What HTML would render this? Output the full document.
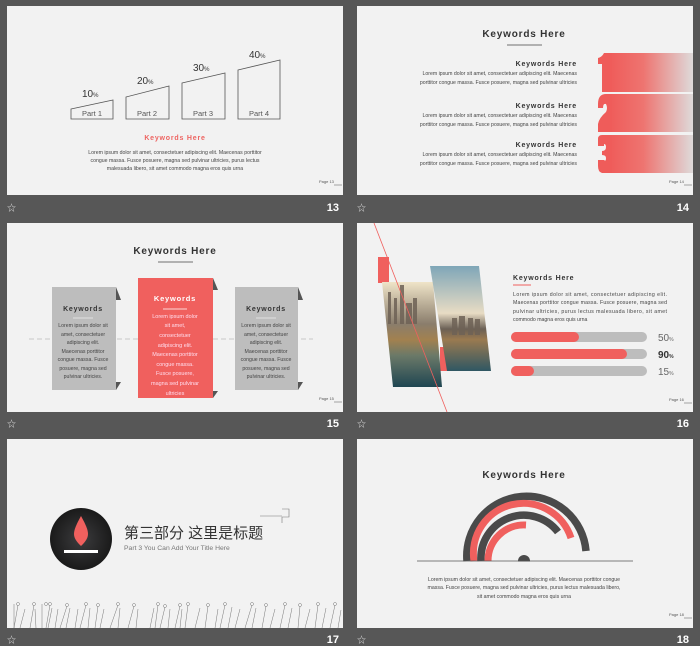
<!DOCTYPE html>
<html><head><meta charset="utf-8"><style>
html,body{margin:0;padding:0;background:#575757;width:700px;height:646px;overflow:hidden}
svg{display:block}
text{font-family:"Liberation Sans","Noto Sans CJK SC",sans-serif}
.b{font-size:5.2px;fill:#444}
.h{font-weight:bold;fill:#333;letter-spacing:.8px}
.pg{font-size:4px;fill:#555}
.num{font-family:"Liberation Serif",serif;font-weight:bold;font-size:11px;fill:#fff}
.st{font-size:9px;fill:#ddd}
</style></head><body>
<svg width="700" height="646" viewBox="0 0 700 646" xmlns="http://www.w3.org/2000/svg">
<defs>
<linearGradient id="g1" x1="0" x2="1"><stop offset="0" stop-color="#ef5c5a"/><stop offset="0.4" stop-color="#ee7470"/><stop offset="1" stop-color="#dedada"/></linearGradient>
<linearGradient id="sky" x1="0" y1="0" x2="0" y2="1"><stop offset="0" stop-color="#7fa6b8"/><stop offset="0.45" stop-color="#e8dcc4"/><stop offset="0.6" stop-color="#6b6055"/><stop offset="0.7" stop-color="#9a7a50"/><stop offset="1" stop-color="#2f5763"/></linearGradient>
<linearGradient id="sky2" x1="0" y1="0" x2="0" y2="1"><stop offset="0" stop-color="#efe4c8"/><stop offset="0.4" stop-color="#8a7d6c"/><stop offset="0.55" stop-color="#a2814f"/><stop offset="0.7" stop-color="#6b7968"/><stop offset="1" stop-color="#1f4652"/></linearGradient>
<radialGradient id="cg"><stop offset="0" stop-color="#3c3c3e"/><stop offset="1" stop-color="#1a1a1a"/></radialGradient>
</defs>
<rect x="7" y="6" width="336" height="189" fill="#f2f2f2"/>
<rect x="357" y="6" width="336" height="189" fill="#f2f2f2"/>
<rect x="7" y="223" width="336" height="189" fill="#f2f2f2"/>
<rect x="357" y="223" width="336" height="189" fill="#f2f2f2"/>
<rect x="7" y="439" width="336" height="189" fill="#f2f2f2"/>
<rect x="357" y="439" width="336" height="189" fill="#f2f2f2"/>

<g class="st"><text x="7" y="211">☆</text><text x="357" y="211">☆</text><text x="7" y="427">☆</text><text x="357" y="427">☆</text><text x="7" y="643">☆</text><text x="357" y="643">☆</text></g>
<g class="num" text-anchor="end"><text x="339" y="211">13</text><text x="689" y="211">14</text><text x="339" y="427">15</text><text x="689" y="427">16</text><text x="339" y="643">17</text><text x="689" y="643">18</text></g>
<g class="pg"><text x="319" y="183">Page 13</text><text x="669" y="183">Page 14</text><text x="319" y="400">Page 15</text><text x="669" y="401">Page 16</text><text x="669" y="616">Page 18</text></g>
<g stroke="#555" stroke-width=".5"><line x1="334" y1="185" x2="342" y2="185"/><line x1="684" y1="185" x2="692" y2="185"/><line x1="334" y1="402" x2="342" y2="402"/><line x1="684" y1="403" x2="692" y2="403"/><line x1="684" y1="618" x2="692" y2="618"/></g>

<!-- slide 13 -->
<g fill="none" stroke="#555" stroke-width=".8">
<path d="M71 109 L113 100 L113 119 L71 119Z"/>
<path d="M126 97 L169 86 L169 119 L126 119Z"/>
<path d="M182 83 L225 73 L225 119 L182 119Z"/>
<path d="M238 70 L280 60 L280 119 L238 119Z"/>
</g>
<g font-size="7.5" fill="#555" text-anchor="middle"><text x="92" y="116">Part 1</text><text x="147" y="116">Part 2</text><text x="203" y="116">Part 3</text><text x="259" y="116">Part 4</text></g>
<g font-size="10" fill="#333"><text x="82" y="97">10<tspan font-size="6">%</tspan></text><text x="137" y="84">20<tspan font-size="6">%</tspan></text><text x="193" y="71">30<tspan font-size="6">%</tspan></text><text x="249" y="58">40<tspan font-size="6">%</tspan></text></g>
<text x="175" y="140" text-anchor="middle" font-size="7" font-weight="bold" fill="#ee6461" letter-spacing=".8">Keywords  Here</text>
<g class="b" text-anchor="middle"><text x="175" y="154">Lorem ipsum dolor sit amet, consectetuer adipiscing elit. Maecenas porttitor</text><text x="175" y="162">congue massa. Fusce posuere, magna sed pulvinar ultricies, purus lectus</text><text x="175" y="170">malesuada libero, sit amet commodo magna eros quis urna</text></g>

<!-- slide 14 -->
<text x="524" y="37" text-anchor="middle" font-size="10" class="h">Keywords Here</text>
<line x1="507" y1="45" x2="542" y2="45" stroke="#444" stroke-width=".8"/>
<g text-anchor="end">
<text x="577" y="66" font-size="7" class="h">Keywords Here</text>
<text x="577" y="75" class="b">Lorem ipsum dolor sit amet, consectetuer adipiscing elit. Maecenas</text><text x="577" y="84" class="b">porttitor congue massa. Fusce posuere, magna sed pulvinar ultricies</text>
<text x="577" y="108" font-size="7" class="h">Keywords Here</text>
<text x="577" y="117" class="b">Lorem ipsum dolor sit amet, consectetuer adipiscing elit. Maecenas</text><text x="577" y="126" class="b">porttitor congue massa. Fusce posuere, magna sed pulvinar ultricies</text>
<text x="577" y="147" font-size="7" class="h">Keywords Here</text>
<text x="577" y="156" class="b">Lorem ipsum dolor sit amet, consectetuer adipiscing elit. Maecenas</text><text x="577" y="165" class="b">porttitor congue massa. Fusce posuere, magna sed pulvinar ultricies</text>
</g>
<rect x="610" y="53" width="83" height="39" fill="url(#g1)"/>
<rect x="610" y="94" width="83" height="38" fill="url(#g1)"/>
<rect x="610" y="135" width="83" height="38" fill="url(#g1)"/>
<g fill="#ef5c5a">
<path d="M604 53 H612 V92 H602 V64 H598 V58 Q602 57 604 53Z"/>
<path d="M598 104 Q598 94 606 94 H612 V132 H598 V124 Q599 118 606 112 Q608 108 606 104 Q603 103 603 108 H598Z"/>
<path d="M599 135 H612 V173 H602 Q598 172 598 166 V160 H604 Q606 162 606 158 Q606 155 602 155 V151 Q606 151 606 147 Q606 144 604 144 V146 H598 V139 Q598 135 602 135Z"/>
</g>

<!-- slide 15 -->
<text x="175" y="254" text-anchor="middle" font-size="10" class="h">Keywords Here</text>
<line x1="158" y1="262" x2="193" y2="262" stroke="#444" stroke-width=".8"/>
<line x1="29" y1="339" x2="313" y2="339" stroke="#bbb" stroke-width=".7" stroke-dasharray="5,3"/>
<path d="M116 287 L121 300 L116 300Z" fill="#555"/><path d="M116 382 L121 382 L116 390Z" fill="#555"/>
<path d="M213 278 L218 290 L213 290Z" fill="#555"/><path d="M213 391 L218 391 L213 398Z" fill="#555"/>
<path d="M298 287 L303 300 L298 300Z" fill="#555"/><path d="M298 382 L303 382 L298 390Z" fill="#555"/>
<rect x="52" y="287" width="64" height="103" fill="#bdbdbd"/>
<rect x="138" y="278" width="75" height="120" fill="#f0605e"/>
<rect x="235" y="287" width="63" height="103" fill="#bdbdbd"/>
<g text-anchor="middle">
<text x="83" y="311" font-size="7" class="h">Keywords</text><line x1="73" y1="318" x2="93" y2="318" stroke="#eee" stroke-width=".8"/>
<g class="b" fill="#333"><text x="83" y="327">Lorem ipsum dolor sit</text><text x="83" y="336">amet, consectetuer</text><text x="83" y="344">adipiscing elit.</text><text x="83" y="353">Maecenas porttitor</text><text x="83" y="361">congue massa. Fusce</text><text x="83" y="370">posuere, magna sed</text><text x="83" y="378">pulvinar ultricies.</text></g>
<text x="175" y="301" font-size="7.5" font-weight="bold" fill="#fff" letter-spacing=".8">Keywords</text><line x1="163" y1="309" x2="187" y2="309" stroke="#fff" stroke-width=".8"/>
<g font-size="5.5" fill="#fde"><text x="175" y="318">Lorem ipsum dolor</text><text x="175" y="327">sit amet,</text><text x="175" y="337">consectetuer</text><text x="175" y="347">adipiscing elit.</text><text x="175" y="356">Maecenas porttitor</text><text x="175" y="366">congue massa.</text><text x="175" y="375">Fusce posuere,</text><text x="175" y="385">magna sed pulvinar</text><text x="175" y="395">ultricies</text></g>
<text x="266" y="311" font-size="7" class="h">Keywords</text><line x1="256" y1="318" x2="276" y2="318" stroke="#eee" stroke-width=".8"/>
<g class="b" fill="#333"><text x="266" y="327">Lorem ipsum dolor sit</text><text x="266" y="336">amet, consectetuer</text><text x="266" y="344">adipiscing elit.</text><text x="266" y="353">Maecenas porttitor</text><text x="266" y="361">congue massa. Fusce</text><text x="266" y="370">posuere, magna sed</text><text x="266" y="378">pulvinar ultricies.</text></g>
</g>

<!-- slide 16 -->
<rect x="378" y="257" width="11" height="26" fill="#f0605e"/>
<rect x="440" y="347" width="13" height="24" fill="#f0605e"/>
<polygon points="382,282 433,282 442,387 393,387" fill="url(#sky2)"/>
<polygon points="430,266 479,266 491,371 447,371" fill="url(#sky)"/>
<g fill="#6e6256" opacity=".85"><rect x="388" y="292" width="3" height="32"/><rect x="394" y="298" width="3" height="26"/><rect x="400" y="285" width="4" height="39"/><rect x="406" y="303" width="6" height="21"/><rect x="413" y="298" width="4" height="26"/><rect x="452" y="318" width="5" height="17"/><rect x="459" y="316" width="6" height="19"/><rect x="468" y="318" width="5" height="17"/><rect x="475" y="319" width="5" height="16"/></g>
<line x1="374" y1="223" x2="447" y2="412" stroke="#f0605e" stroke-width=".8"/>
<text x="513" y="280" font-size="7" class="h">Keywords Here</text>
<line x1="513" y1="285" x2="531" y2="285" stroke="#f0605e" stroke-width="1"/>
<g class="b"><text x="513" y="296" textLength="154">Lorem ipsum dolor sit amet, consectetuer adipiscing elit.</text><text x="513" y="304" textLength="154">Maecenas porttitor congue massa. Fusce posuere, magna sed</text><text x="513" y="313" textLength="154">pulvinar ultricies, purus lectus malesuada libero, sit amet</text><text x="513" y="321">commodo magna eros quis urna</text></g>
<g><rect x="511" y="332" width="136" height="10" rx="5" fill="#bdbdbd"/><rect x="511" y="332" width="68" height="10" rx="5" fill="#f0605e"/>
<rect x="511" y="349" width="136" height="10" rx="5" fill="#bdbdbd"/><rect x="511" y="349" width="116" height="10" rx="5" fill="#f0605e"/>
<rect x="511" y="366" width="136" height="10" rx="5" fill="#bdbdbd"/><rect x="511" y="366" width="23" height="10" rx="5" fill="#f0605e"/></g>
<g font-size="10" fill="#666" font-family="Liberation Sans Narrow,Liberation Sans,sans-serif"><text x="658" y="341">50<tspan font-size="5">%</tspan></text><text x="658" y="358" fill="#333" font-weight="bold">90<tspan font-size="5">%</tspan></text><text x="658" y="375">15<tspan font-size="5">%</tspan></text></g>

<!-- slide 17 -->
<circle cx="81" cy="539" r="31" fill="url(#cg)"/>
<path d="M81 516 C76 525 74 530 74 534 C74 539 78 543 81 546 C84 543 88 539 88 534 C88 530 86 525 81 516Z" fill="#f0605e"/>
<rect x="64" y="550" width="34" height="3" fill="#fff"/>
<text x="124" y="538" font-size="15" fill="#333" font-family="Liberation Sans,'Noto Sans CJK SC',sans-serif">第三部分  这里是标题</text>
<text x="124" y="550" font-size="6.8" fill="#777">Part 3  You Can Add Your Title Here</text>
<g stroke="#777" stroke-width=".6" fill="none"><path d="M260 516 L282 516"/><path d="M282 509 L289 509 L289 517 L282 517 L282 523"/></g>
<g stroke="#777" stroke-width=".5" fill="none">
<path d="M14 628 V604 M18 605 L14 628 M20 628 L25 609 M30 628 L34 605 M36 628 L35 609 M42 628 V604 M46 628 L50 605 M48 628 L52 608 M55 628 L58 609 M60 628 L67 606 M66 628 L70 608 M75 628 L78 609 M80 628 L86 605 M88 628 L90 608 M95 628 L98 606 M100 628 L104 609 M110 628 L118 605 M118 628 L120 608 M128 628 L134 606 M136 628 L138 609 M150 628 L154 608 M155 628 L158 605 M160 628 L165 607 M168 628 L170 609 M175 628 L180 606 M180 628 L182 609 M185 628 L188 605 M195 628 L200 608 M205 628 L208 606 M215 628 L218 609 M220 628 L225 605 M228 628 L232 607 M235 628 L240 609 M245 628 L252 605 M252 628 L256 608 M262 628 L266 606 M270 628 L275 609 M280 628 L285 605 M288 628 L292 608 M298 628 L300 606 M305 628 L310 609 M315 628 L318 605 M322 628 L326 608 M330 628 L335 605 M338 628 L341 610"/>
<g fill="#f2f2f2"><circle cx="18" cy="604" r="1.5"/><circle cx="34" cy="604" r="1.5"/><circle cx="46" cy="604" r="1.5"/><circle cx="50" cy="604" r="1.5"/><circle cx="67" cy="605" r="1.5"/><circle cx="86" cy="604" r="1.5"/><circle cx="98" cy="605" r="1.5"/><circle cx="118" cy="604" r="1.5"/><circle cx="134" cy="605" r="1.5"/><circle cx="158" cy="604" r="1.5"/><circle cx="165" cy="606" r="1.5"/><circle cx="180" cy="605" r="1.5"/><circle cx="188" cy="604" r="1.5"/><circle cx="208" cy="605" r="1.5"/><circle cx="225" cy="604" r="1.5"/><circle cx="252" cy="604" r="1.5"/><circle cx="266" cy="605" r="1.5"/><circle cx="285" cy="604" r="1.5"/><circle cx="300" cy="605" r="1.5"/><circle cx="318" cy="604" r="1.5"/><circle cx="335" cy="604" r="1.5"/></g>
</g>

<!-- slide 18 -->
<text x="524" y="478" text-anchor="middle" font-size="10" class="h">Keywords Here</text>
<g fill="none">
<path d="M467 561 A57 57 0 1 1 586 551" stroke="#4a4a4a" stroke-width="7.5"/>
<path d="M474 561 A50 50 0 0 1 571 538" stroke="#f0605e" stroke-width="7"/>
<path d="M481 561 A43 43 0 0 1 558 532" stroke="#4a4a4a" stroke-width="7.5"/>
<path d="M488 561 A36 36 0 0 1 526 525" stroke="#f0605e" stroke-width="7"/>
</g>
<circle cx="524" cy="561" r="6" fill="#4a4a4a"/>
<rect x="515" y="561.5" width="18" height="7" fill="#f2f2f2"/>
<line x1="417" y1="561" x2="633" y2="561" stroke="#555" stroke-width=".8"/>
<g class="b" text-anchor="middle"><text x="524" y="581">Lorem ipsum dolor sit amet, consectetuer adipiscing elit. Maecenas porttitor congue</text><text x="524" y="589">massa. Fusce posuere, magna sed pulvinar ultricies, purus lectus malesuada libero,</text><text x="524" y="598">sit amet commodo magna eros quis urna</text></g>
</svg>
</body></html>
